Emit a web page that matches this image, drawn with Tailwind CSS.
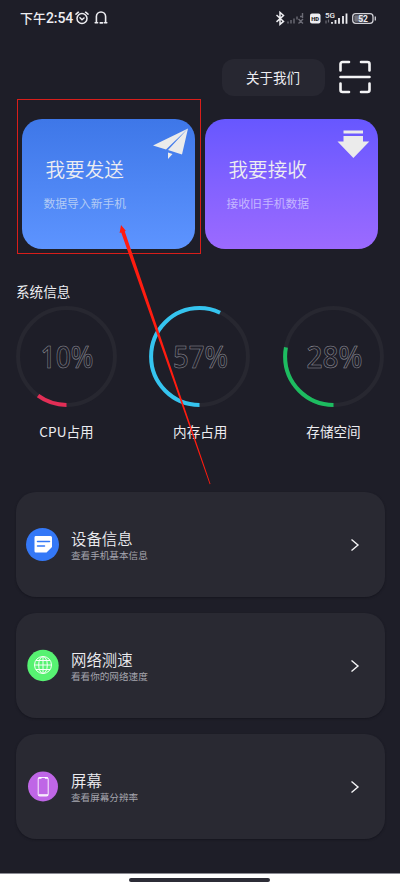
<!DOCTYPE html>
<html lang="zh-CN">
<head>
<meta charset="utf-8">
<meta name="viewport" content="width=device-width, initial-scale=1">
<title>手机助手</title>
<script src="https://cdn.jsdelivr.net/npm/@tailwindcss/browser@4"></script>
</head>
<body class="bg-[#1e1e28] font-['Noto_Sans_CJK_SC',sans-serif] text-[#ededf1]">
<div class="relative flex h-[889px] w-[400px] flex-col overflow-hidden bg-[#1e1e28]">

  <!-- Status bar -->
  <header class="flex h-[35px] shrink-0 items-center justify-between pl-5 pr-6">
    <div class="flex items-center">
      <span class="w-[54px] whitespace-nowrap text-[13px] font-medium leading-[34px]">下午<span class="font-[Roboto] text-[14px] tracking-[-0.1px]">2:54</span></span>
      <svg class="ml-px" width="14" height="14" viewBox="0 0 14 14" fill="none" stroke="#ededf1" stroke-width="1.5" stroke-linecap="round"><circle cx="7" cy="7.5" r="5"/><path d="M1 3.2 3.4 1.2M13 3.2 10.6 1.2M5 6.8l2 1.9 2-1.7"/></svg>
      <svg class="ml-[5px]" width="14" height="14" viewBox="0 0 14 14" fill="none" stroke="#ededf1" stroke-width="1.600" stroke-linecap="round"><path d="M2.400 11V5.600a4.600 4.600 0 0 1 9.200 0V11M1.200 11.700h2.400M10.400 11.700h2.400M6.200 11.900h2.300"/></svg>
    </div>
    <svg width="100" height="18" viewBox="276 8 100 18" fill="none">
      <path d="M276.500 14l7 6.400-3.500 3V11.500l3.500 3-7 6.400" stroke="#ededf1" stroke-width="1.500"/>
      <path d="M288 20.500v2M291 19v3.500M294 17.500v5M297 15.500v3M302.500 12v5M300 15.500h2.500M298.500 18l4.500 4.500M303 18l-4.500 4.500" stroke="#6c6c76" stroke-width="1.400"/>
      <rect x="310" y="12.500" width="10.500" height="10" rx="2" fill="#ededf1"/>
      <text x="311.200" y="19.700" font-family="Roboto" font-size="5.800" font-weight="900" fill="#1e1e28">HD</text>
      <text x="325" y="16.500" font-family="Roboto" font-size="8" font-weight="500" fill="#ededf1">5G</text>
      <path d="M326 19.500v3M328.500 18.500v3" stroke="#6c6c76" stroke-width="1.200"/>
      <path d="M332 21v1.800M335.500 19v3.800M339 17v5.800M343 15v7.800M346.500 12.500v10.300" stroke="#ededf1" stroke-width="1.800"/>
      <rect x="352.700" y="12.700" width="20.300" height="9.600" rx="3" stroke="#d0d0d6" stroke-width="1.300"/>
      <rect x="354.300" y="14.200" width="9" height="6.600" rx="1" fill="#74747d"/>
      <path d="M375.300 15.500v4" stroke="#d0d0d6" stroke-width="1.300"/>
      <text x="358.200" y="20.500" font-family="Roboto" font-size="8.500" font-weight="700" fill="#ededf1">52</text>
    </svg>
  </header>

  <!-- Top actions -->
  <div class="mt-6 flex h-[37px] shrink-0 items-center justify-end gap-[14px] pr-[29px]">
    <button class="h-[37px] w-[103px] rounded-xl bg-[#272731] pr-px text-[13.500px] leading-[37px]">关于我们</button>
    <svg class="-mt-[2px]" width="32" height="34" viewBox="0 0 32 34" fill="none" stroke="#f4f4f6" stroke-width="2.600" stroke-linecap="round" stroke-linejoin="round"><path d="M1.500 10.500V4a2 2 0 0 1 2-2H10M22 2h6.500a2 2 0 0 1 2 2v6.500M30.500 23.500V30a2 2 0 0 1-2 2H22M10 32H3.500a2 2 0 0 1-2-2v-6.500M1.500 17h29"/></svg>
  </div>

  <!-- Transfer cards -->
  <div class="mt-[23px] flex h-[129.5px] shrink-0 gap-[9.5px] pl-[21.5px]">
    <section class="relative w-[173.5px] rounded-[20px] bg-linear-to-b from-[#3e77e8] to-[#5d94ff]">
      <h2 class="pl-[24px] pt-[36px] text-[19.6px] font-[350] leading-[28px]">我要发送</h2>
      <p class="pl-[22px] pt-[11px] text-[11.8px] leading-[18px] text-[#b3cbf5]">数据导入新手机</p>
      <svg class="absolute left-[130px] top-[9px]" width="37" height="33" viewBox="0 0 37 33" fill="#ebebeb"><path d="M36 .5 1 17.500l13 4zM36 .5 16 22l14 4.500zM16 24.500l4.500 1.500-4.500 5z"/></svg>
    </section>
    <section class="relative w-[173.5px] rounded-[20px] bg-linear-to-b from-[#6757ff] to-[#9c6aff]">
      <h2 class="pl-[24px] pt-[36px] text-[19.6px] font-[350] leading-[28px]">我要接收</h2>
      <p class="pl-[22px] pt-[11px] text-[11.8px] leading-[18px] text-[#c5b6ff]">接收旧手机数据</p>
      <svg class="absolute left-[132.5px] top-[11px]" width="33" height="29" viewBox="0 0 33 29" fill="#ebebeb"><path d="M6.500.500H26v3H6.500zM6.500 6H26v5.500h6.300L16.400 28 .500 11.500h6z"/></svg>
    </section>
  </div>

  <!-- System usage -->
  <h3 class="mt-[32.5px] shrink-0 pl-4 text-[13.6px] leading-5">系统信息</h3>
  <div class="mt-[5px] flex shrink-0 justify-between pl-4 pr-[16.5px]">
    <figure class="flex w-[101px] flex-col items-center">
      <svg width="101" height="101" viewBox="0 0 101 101" fill="none" stroke-width="4"><circle cx="50.500" cy="50.500" r="48.400" stroke="#272730"/><circle cx="50.500" cy="50.500" r="48.400" stroke="#e22e56" pathLength="100" stroke-dasharray="10 90" transform="rotate(90 50.500 50.500)"/><text x="51" y="61.500" text-anchor="middle" font-family="Noto Sans" font-weight="500" font-size="30" textLength="53" lengthAdjust="spacingAndGlyphs" stroke="#92929a" stroke-width=".55">10%</text></svg>
      <figcaption class="mt-[14px] text-[13.600px] leading-5">CPU占用</figcaption>
    </figure>
    <figure class="flex w-[101px] flex-col items-center">
      <svg width="101" height="101" viewBox="0 0 101 101" fill="none" stroke-width="4"><circle cx="50.500" cy="50.500" r="48.400" stroke="#272730"/><circle cx="50.500" cy="50.500" r="48.400" stroke="#35c4ef" pathLength="100" stroke-dasharray="57 43" transform="rotate(90 50.500 50.500)"/><text x="51.500" y="61.500" text-anchor="middle" font-family="Noto Sans" font-weight="500" font-size="30" textLength="55" lengthAdjust="spacingAndGlyphs" stroke="#92929a" stroke-width=".55">57%</text></svg>
      <figcaption class="mt-[14px] pl-px text-[13.600px] leading-5">内存占用</figcaption>
    </figure>
    <figure class="flex w-[101px] flex-col items-center">
      <svg width="101" height="101" viewBox="0 0 101 101" fill="none" stroke-width="4"><circle cx="50.500" cy="50.500" r="48.400" stroke="#272730"/><circle cx="50.500" cy="50.500" r="48.400" stroke="#1dbc60" pathLength="100" stroke-dasharray="28 72" transform="rotate(90 50.500 50.500)"/><text x="51.500" y="61.500" text-anchor="middle" font-family="Noto Sans" font-weight="500" font-size="30" textLength="56" lengthAdjust="spacingAndGlyphs" stroke="#92929a" stroke-width=".55">28%</text></svg>
      <figcaption class="mt-[14px] pl-px text-[13.600px] leading-5">存储空间</figcaption>
    </figure>
  </div>

  <!-- Detail entries -->
  <nav class="mt-[51.2px] flex shrink-0 flex-col gap-4 pl-4 pr-[15.500px]">
    <a class="flex h-[105px] items-center rounded-[20px] bg-[#292932] pl-[10px] pr-[25px] shadow-[0_1px_2px_#16161f]">
      <svg width="33" height="33" viewBox="0 0 33 33"><circle cx="16.500" cy="16.500" r="16.500" fill="#3478f7"/><path d="M9.500 8h15A1.500 1.500 0 0 1 26 9.500V19l-5.500 5.500h-11A1.500 1.500 0 0 1 8.500 23V9.500A1.500 1.500 0 0 1 9.500 8z" fill="#fff"/><path d="M11.500 13.500h12M11.500 18h7" stroke="#3478f7" stroke-width="1.500" stroke-linecap="round"/></svg>
      <div class="ml-[12px] flex-1">
        <h4 class="text-[15.400px] font-[350] leading-[20px]">设备信息</h4>
        <p class="text-[9.600px] leading-[14px] text-[#a5a5ae]">查看手机基本信息</p>
      </div>
      <svg width="10" height="14" viewBox="0 0 10 14" fill="none" stroke="#f4f4f6" stroke-width="1.400"><path d="M1.500 1.500 8 7l-6.500 5.500"/></svg>
    </a>
    <a class="flex h-[105px] items-center rounded-[20px] bg-[#292932] pl-[10px] pr-[25px] shadow-[0_1px_2px_#16161f]">
      <svg width="33" height="33" viewBox="0 0 33 33" fill="none"><circle cx="17" cy="16.500" r="15.700" fill="#57f272"/><g stroke="#f4fff5" stroke-width="1"><circle cx="17" cy="16" r="8.500"/><ellipse cx="17" cy="16" rx="4.300" ry="8.500"/><path d="M17 7.500v17M8.500 16h17M9.800 11.500h14.400M9.800 20.500h14.400"/></g></svg>
      <div class="ml-[12px] flex-1">
        <h4 class="text-[15.400px] font-[350] leading-[20px]">网络测速</h4>
        <p class="text-[9.600px] leading-[14px] text-[#a5a5ae]">看看你的网络速度</p>
      </div>
      <svg width="10" height="14" viewBox="0 0 10 14" fill="none" stroke="#f4f4f6" stroke-width="1.400"><path d="M1.500 1.500 8 7l-6.500 5.500"/></svg>
    </a>
    <a class="flex h-[105px] items-center rounded-[20px] bg-[#292932] pl-[10px] pr-[25px] shadow-[0_1px_2px_#16161f]">
      <svg width="33" height="33" viewBox="0 0 33 33" fill="none"><circle cx="17" cy="16.500" r="15" fill="#bf66e6"/><rect x="12.200" y="7.500" width="10" height="18.500" rx="1.500" stroke="#fff" stroke-width=".9"/><path d="M12.500 8h3M18.900 8h3M12.500 25h9.500" stroke="#fff" stroke-width="1.500"/></svg>
      <div class="ml-[12px] flex-1">
        <h4 class="text-[15.400px] font-[350] leading-[20px]">屏幕</h4>
        <p class="text-[9.600px] leading-[14px] text-[#a5a5ae]">查看屏幕分辨率</p>
      </div>
      <svg width="10" height="14" viewBox="0 0 10 14" fill="none" stroke="#f4f4f6" stroke-width="1.400"><path d="M1.500 1.500 8 7l-6.500 5.500"/></svg>
    </a>
  </nav>

  <!-- Gesture bar -->
  <footer class="mt-auto flex h-4 shrink-0 justify-center border-t border-[#8c8c94] bg-white pr-[2px] pt-[4px]">
    <div class="h-1 w-[141px] rounded-full bg-[#2c2c36]"></div>
  </footer>

  <!-- Highlight frame and arrow -->
  <div class="pointer-events-none absolute left-[17px] top-[99px] h-[155px] w-[184px] border border-[#d81e1a]"></div>
  <svg class="pointer-events-none absolute left-0 top-0" width="400" height="500" viewBox="0 0 400 500" fill="#ff1c10"><path d="M121 225l4.800 5.800-1 .8L210.500 484l-.8.200L121.200 232.500l-1.600.5z"/></svg>
</div>
</body>
</html>
